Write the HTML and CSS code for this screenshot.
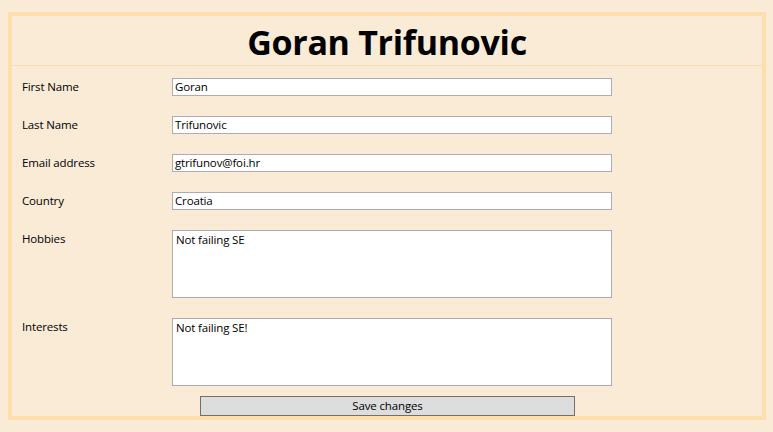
FILE: index.html
```html
<!DOCTYPE html>
<html>
<head>
<meta charset="utf-8">
<link rel="stylesheet" href="styles.css">
</head>
<body>
<div class="frame">
  <div class="header"><h1 class="title">Goran Trifunovic</h1></div>
  <div class="form">
    <div class="label">First Name</div>
    <div class="field"><div class="input">Goran</div></div>
    <div class="label">Last Name</div>
    <div class="field"><div class="input">Trifunovic</div></div>
    <div class="label">Email address</div>
    <div class="field"><div class="input">gtrifunov@foi.hr</div></div>
    <div class="label">Country</div>
    <div class="field"><div class="input">Croatia</div></div>
    <div class="label">Hobbies</div>
    <div class="field"><div class="input area">Not failing SE</div></div>
    <div class="label">Interests</div>
    <div class="field"><div class="input area">Not failing SE!</div></div>
  </div>
  <div class="actions"><div class="button">Save changes</div></div>
</div>
</body>
</html>
```

FILE: styles.css
```css
html, body {
  margin: 0;
  padding: 0;
  background: #faebd7;
}
body {
  padding: 12px 7px 12px 8px;
  font-family: "Open Sans", "Noto Sans", sans-serif;
  font-size: 12px;
  color: #000;
}
.frame {
  border: 4px solid #ffdead;
  height: 400px;
  box-sizing: content-box;
}
.header {
  height: 49px;
  border-bottom: 1px solid #f9dcb6;
  display: flex;
  align-items: center;
  justify-content: center;
}
.title {
  margin: 0;
  font-size: 34px;
  font-weight: 700;
  line-height: 1;
  letter-spacing: -0.3px;
  position: relative;
  top: 1px;
}
.form {
  display: grid;
  grid-template-columns: 150px 440px;
  row-gap: 20px;
  padding: 12px 0 0 10px;
}
.label {
  line-height: 18px;
  font-size: 11.5px;
  letter-spacing: -0.15px;
}
.input {
  height: 16px;
  border: 1px solid #abadb3;
  background: #fff;
  line-height: 16px;
  padding: 0 2px;
  font-size: 11.5px;
  letter-spacing: -0.15px;
  white-space: nowrap;
}
.input.area {
  padding: 1px 3px;
  height: 64px;
}
.actions {
  padding: 10px 0 0 188px;
}
.button {
  width: 373px;
  height: 18px;
  border: 1px solid #707070;
  background: #dddddd;
  text-align: center;
  line-height: 18px;
  font-size: 11.5px;
  letter-spacing: -0.15px;
}
```
